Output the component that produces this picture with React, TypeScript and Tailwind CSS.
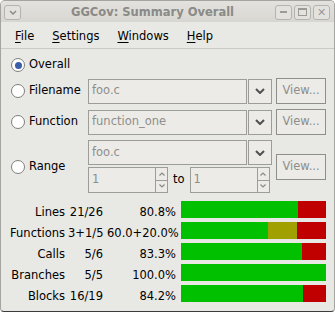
import React from "react";

const font = { fontFamily: '"DejaVu Sans", "Liberation Sans", sans-serif' };

function Radio({ checked }: { checked?: boolean }) {
  return (
    <span className="flex h-[14px] w-[14px] shrink-0 items-center justify-center rounded-full border border-[#7f7f7b] bg-white">
      {checked && <span className="h-[7px] w-[7px] rounded-full bg-[#3d5fa8]" />}
    </span>
  );
}

function Chevron({ w = 10, h = 6, sw = 2, color = "#505050" }: { w?: number; h?: number; sw?: number; color?: string }) {
  return (
    <svg width={w} height={h} viewBox={`0 0 ${w} ${h}`}>
      <polyline points={`1,1 ${w / 2},${h - 1} ${w - 1},1`} fill="none" stroke={color} strokeWidth={sw} />
    </svg>
  );
}

function Combo({ value }: { value: string }) {
  return (
    <div className="flex h-[25px]">
      <div className="flex w-[159px] items-center border border-[#9c9c98] bg-[#ecebe8] pl-[3px] text-[#8e8e8b]">
        {value}
      </div>
      <div className="ml-[1px] flex w-[24px] items-center justify-center border border-[#9c9c98] bg-[#ecebe8]">
        <Chevron />
      </div>
    </div>
  );
}

function ViewButton() {
  return (
    <div className="flex h-[26px] w-[50px] items-center justify-center border border-[#8e8e8a] bg-[#ecebe8] text-[#8e8e8b]">
      View...
    </div>
  );
}

function Spinner() {
  return (
    <div className="flex h-[26px]">
      <div className="flex w-[68px] items-center border border-[#9c9c98] bg-[#ecebe8] pl-[3px] text-[#8e8e8b]">1</div>
      <div className="flex w-[12px] flex-col">
        <div className="flex flex-1 items-center justify-center border border-l-0 border-[#9c9c98] bg-[#ecebe8]">
          <svg width="6" height="4" viewBox="0 0 6 4">
            <polyline points="0.5,3.5 3,1 5.5,3.5" fill="none" stroke="#8a8a86" strokeWidth="1.2" />
          </svg>
        </div>
        <div className="flex flex-1 items-center justify-center border border-l-0 border-t-0 border-[#9c9c98] bg-[#ecebe8]">
          <svg width="6" height="4" viewBox="0 0 6 4">
            <polyline points="0.5,0.5 3,3 5.5,0.5" fill="none" stroke="#8a8a86" strokeWidth="1.2" />
          </svg>
        </div>
      </div>
    </div>
  );
}

function TitleButton({ children }: { children: React.ReactNode }) {
  return (
    <div className="flex h-[15px] w-[17px] items-center justify-center rounded-[3px] border border-[#b5b3ae] bg-[#e4e2de]">
      {children}
    </div>
  );
}

const stats = [
  { name: "Lines", frac: "21/26", pct: "80.8%", parts: [80.8, 0, 19.2] },
  { name: "Functions", frac: "3+1/5", pct: "60.0+20.0%", parts: [60, 20, 20] },
  { name: "Calls", frac: "5/6", pct: "83.3%", parts: [83.3, 0, 16.7] },
  { name: "Branches", frac: "5/5", pct: "100.0%", parts: [100, 0, 0] },
  { name: "Blocks", frac: "16/19", pct: "84.2%", parts: [84.2, 0, 15.8] },
];

function Under({ c }: { c: string }) {
  return <span className="underline decoration-1 underline-offset-2">{c}</span>;
}

export default function App() {
  return (
    <div
      style={font}
      className="flex h-[312px] w-[335px] flex-col overflow-hidden rounded-t-[5px] rounded-b-[4px] border border-[#a4a4a0] border-b-[#3c3c3c] bg-[#e8e8e5] text-[11.5px] text-black"
    >
      {/* title bar */}
      <div className="flex h-[21px] items-center bg-gradient-to-b from-[#e4e2de] to-[#d8d6d1] pl-[3px] pr-[4px] pt-[1px]">
        <TitleButton>
          <Chevron w={8} h={5} sw={1.5} color="#8c8c88" />
        </TitleButton>
        <div className="flex-1 pl-[9px] pt-[1px] text-center font-bold text-[#8a8a87]">GGCov: Summary Overall</div>
        <div className="flex gap-[2px]">
          <TitleButton>
            <span className="h-[2px] w-[7px] bg-[#9a9a96]" />
          </TitleButton>
          <TitleButton>
            <span className="h-[8px] w-[9px] border border-t-2 border-[#9a9a96]" />
          </TitleButton>
          <TitleButton>
            <span className="text-[11px] font-bold leading-none text-[#9a9a96]">✕</span>
          </TitleButton>
        </div>
      </div>

      {/* menu bar */}
      <div className="flex h-[27px] items-center gap-[18px] border-b border-[#c9c9c5] pl-[14px] pt-[3px]">
        <span><Under c="F" />ile</span>
        <span><Under c="S" />ettings</span>
        <span><Under c="W" />indows</span>
        <span><Under c="H" />elp</span>
      </div>

      {/* selector */}
      <div className="flex flex-col pl-[10px] pt-[8px]">
        <div className="flex h-[16px] items-center gap-[4px]">
          <Radio checked />
          <span>Overall</span>
        </div>

        <div className="mt-[5px] flex h-[26px] items-center">
          <div className="flex w-[77px] items-center gap-[4px]">
            <Radio />
            <span>Filename</span>
          </div>
          <Combo value="foo.c" />
          <div className="ml-[4px]"><ViewButton /></div>
        </div>

        <div className="mt-[5px] flex h-[26px] items-center">
          <div className="flex w-[77px] items-center gap-[4px]">
            <Radio />
            <span>Function</span>
          </div>
          <Combo value="function_one" />
          <div className="ml-[4px]"><ViewButton /></div>
        </div>

        <div className="mt-[5px] flex items-center">
          <div className="flex w-[77px] items-center gap-[4px]">
            <Radio />
            <span>Range</span>
          </div>
          <div className="flex flex-col gap-[2px]">
            <Combo value="foo.c" />
            <div className="flex items-center">
              <Spinner />
              <span className="mx-[5px]">to</span>
              <Spinner />
            </div>
          </div>
          <div className="ml-[4px]"><ViewButton /></div>
        </div>
      </div>

      {/* stats */}
      <div className="mt-[8px] flex flex-col pl-[7px]">
        {stats.map((s) => (
          <div key={s.name} className="flex h-[21px] items-start">
            <span className="w-[57px] pt-[3px] text-right leading-[17px]">{s.name}</span>
            <span className="ml-[3px] w-[35px] pt-[3px] text-right leading-[17px]">{s.frac}</span>
            <span className="ml-[4px] w-[69px] pt-[3px] text-right leading-[17px]">{s.pct}</span>
            <div className="ml-[5px] flex h-[17px] w-[145px]">
              <div className="bg-[#00c000]" style={{ width: `${s.parts[0]}%` }} />
              <div className="bg-[#a0a000]" style={{ width: `${s.parts[1]}%` }} />
              <div className="bg-[#c00000]" style={{ width: `${s.parts[2]}%` }} />
            </div>
          </div>
        ))}
      </div>
    </div>
  );
}
